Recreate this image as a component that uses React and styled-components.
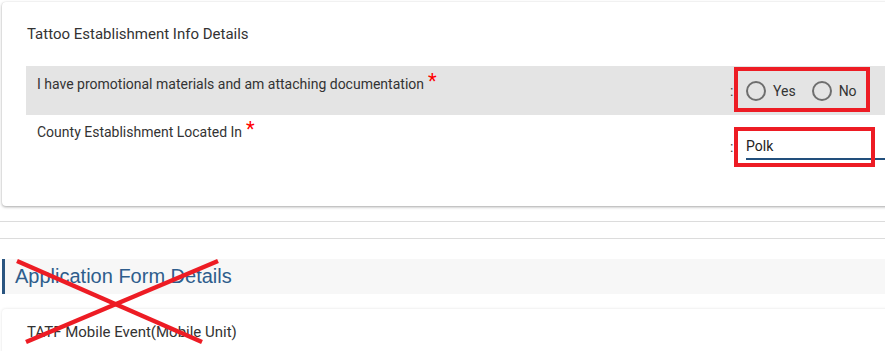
import styled, {createGlobalStyle} from 'styled-components';

const GlobalStyle = createGlobalStyle`
    html, body {
        margin: 0;
        padding: 0;
        background: #fff;
        overflow: hidden;
    }
    body {
        font-family: Roboto, "Liberation Sans", Arial, sans-serif;
        color: #333;
    }
`

const Page = styled.div`
    position: relative;
    width: 940px;
    padding: 2px 0 0 2px;
`

const Card = styled.div`
    background: #fff;
    border-radius: 4px;
    box-shadow: 0 1px 3px rgba(0, 0, 0, 0.35), 0 0 1px rgba(0, 0, 0, 0.08);
    padding: ${props => props.$pad || '22px 0 27px 24px'};
`

const CardTitle = styled.div`
    font-size: 15px;
    line-height: 20px;
    padding-left: 1px;
    margin-bottom: 22px;
`

const Row = styled.div`
    display: grid;
    grid-template-columns: 700px 1fr;
    min-height: ${props => props.$height}px;
    background: ${props => props.$shaded ? '#e4e4e4' : 'transparent'};
`

const Label = styled.div`
    font-size: 14px;
    line-height: 20px;
    padding: ${props => props.$top}px 11px 0;
`

const Required = styled.span`
    color: #f00;
    font-size: 20px;
    line-height: 1;
    vertical-align: top;
    margin-left: 4px;
    position: relative;
    top: -3px;
`

const ValueCell = styled.div`
    display: flex;
    align-items: center;
    padding-left: 4px;
`

const Colon = styled.span`
    width: 16px;
    font-size: 14px;
    color: #444;
`

const RadioGroup = styled.div`
    display: flex;
    align-items: center;
`

const RadioOption = styled.label`
    display: flex;
    align-items: center;
    gap: 7px;
    font-size: 14px;
    margin-right: 16px;
    cursor: pointer;
`

const RadioCircle = styled.span`
    width: 16px;
    height: 16px;
    border: 2px solid #6e6e6e;
    border-radius: 50%;
`

const TextInput = styled.input`
    width: 200px;
    height: 24px;
    border: 0;
    border-bottom: 2px solid #224f7c;
    background: transparent;
    padding: 0;
    font-family: Roboto, "Liberation Sans", Arial, sans-serif;
    font-size: 14px;
    color: #222;
    outline: none;
`

const Divider = styled.div`
    height: 1px;
    background: #dcdcdc;
    margin: ${props => props.$gap}px 0 0 -2px;
`

const SectionHeader = styled.div`
    margin-top: 20px;
    height: 35px;
    display: flex;
    align-items: center;
    background: #f7f7f7;
    border-left: 3px solid #2a5580;
    padding-left: 10px;
    font-family: "Liberation Sans", Arial, sans-serif;
    font-size: 20px;
    color: #2e5d8c;
`

const SubCard = styled(Card)`
    margin-top: 15px;
    border-radius: 4px 4px 0 0;
    box-shadow: 0 0 3px rgba(0, 0, 0, 0.12);
`

const SubTitle = styled.div`
    font-size: 15px;
    line-height: 20px;
`

const Highlight = styled.div`
    position: absolute;
    border: 4px solid #ed1c24;
    box-sizing: border-box;
    pointer-events: none;
`

const Cross = styled.svg`
    position: absolute;
    left: 0;
    top: 250px;
    pointer-events: none;
`

const App = () => {
    return (
        <>
            <GlobalStyle/>
            <Page>
                <Card>
                    <CardTitle>Tattoo Establishment Info Details</CardTitle>
                    <Row $shaded $height={49}>
                        <Label $top={8}>
                            I have promotional materials and am attaching documentation<Required>*</Required>
                        </Label>
                        <ValueCell>
                            <Colon>:</Colon>
                            <RadioGroup>
                                <RadioOption><RadioCircle/>Yes</RadioOption>
                                <RadioOption><RadioCircle/>No</RadioOption>
                            </RadioGroup>
                        </ValueCell>
                    </Row>
                    <Row $height={64}>
                        <Label $top={7}>
                            County Establishment Located In<Required>*</Required>
                        </Label>
                        <ValueCell>
                            <Colon>:</Colon>
                            <TextInput defaultValue="Polk"/>
                        </ValueCell>
                    </Row>
                </Card>
                <Divider $gap={15}/>
                <Divider $gap={16}/>
                <SectionHeader>Application Form Details</SectionHeader>
                <SubCard $pad="13px 25px 20px">
                    <SubTitle>TATF Mobile Event(Mobile Unit)</SubTitle>
                </SubCard>

                {/* review annotations */}
                <Highlight style={{left: 734, top: 67, width: 136, height: 45}}/>
                <Highlight style={{left: 734, top: 127, width: 141, height: 40}}/>
                <Cross width="240" height="100" viewBox="0 0 240 100">
                    <line x1="17" y1="11" x2="202" y2="92" stroke="#ed1c24" strokeWidth="4.5"/>
                    <line x1="218" y1="11" x2="26" y2="92" stroke="#ed1c24" strokeWidth="4.5"/>
                </Cross>
            </Page>
        </>
    );
}

export default App;
